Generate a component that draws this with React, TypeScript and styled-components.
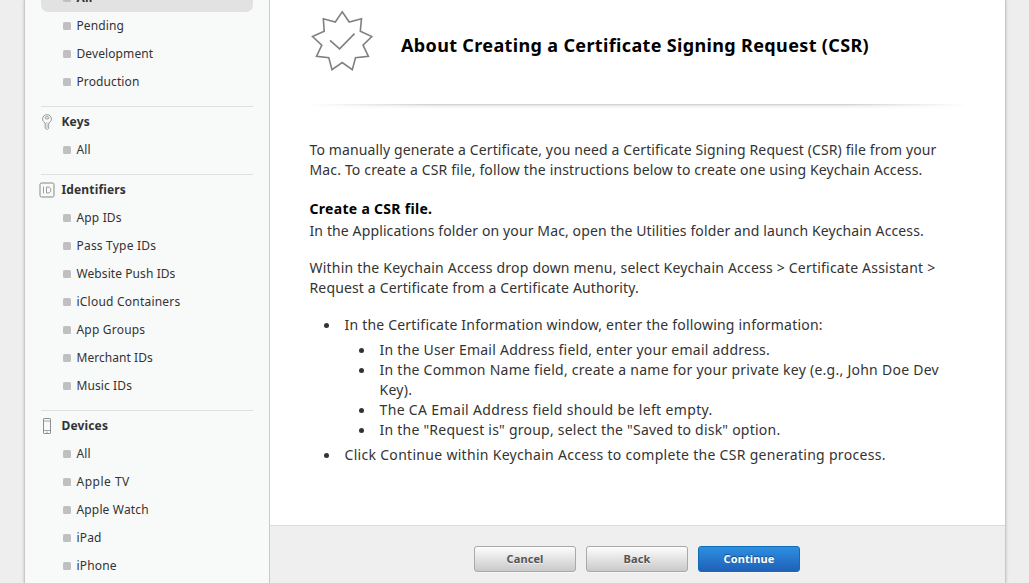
import React from "react";
import styled, { createGlobalStyle } from "styled-components";

const GlobalStyle = createGlobalStyle`
  * { box-sizing: border-box; }
  html, body { margin: 0; height: 583px; overflow: hidden; background: #eee; }
  body { font-family: "Lucida Grande", "Noto Sans", sans-serif; color: #333; }
`;

const Page = styled.div`
  display: flex;
  width: 982px;
  height: 583px;
  margin-left: 24px;
  overflow: hidden;
  background: #fff;
  border: solid #c9c9c9;
  border-width: 0 1px;
  box-shadow: 0 0 3px rgba(0, 0, 0, 0.2);
`;

const Sidebar = styled.nav`
  flex: 0 0 245px;
  padding: 0 16px;
  background: #f8faf9;
  border-right: 1px solid #c9c9c9;
`;

const Section = styled.section<{ $first?: boolean }>`
  padding-bottom: 10px;
  ${(p) => (p.$first ? "margin-top: -16px;" : "border-top: 1px solid #dedfdf; padding-top: 1px;")}
`;

const SectionTitle = styled.h3`
  display: flex;
  align-items: center;
  gap: 6.5px;
  height: 28px;
  margin: 0 0 0 -2px;
  font-size: 12px;
  line-height: 28px;
  font-weight: 700;
  letter-spacing: 0.15px;
  svg { flex: none; }
`;

const Item = styled.a<{ $active?: boolean }>`
  display: flex;
  align-items: center;
  height: 28px;
  padding-left: 22px;
  gap: 5.5px;
  font-size: 12px;
  line-height: 28px;
  font-weight: ${(p) => (p.$active ? 700 : 400)};
  border-radius: 7px;
  background: ${(p) => (p.$active ? "#e2e2e2" : "none")};
  white-space: nowrap;
  &::before {
    content: "";
    flex: none;
    width: 8px;
    height: 8px;
    border-radius: 1.5px;
    background: #c0c0c0;
  }
`;

const ItemLabel = styled.span<{ $track?: number }>`
  letter-spacing: ${(p) => p.$track ?? 0.15}px;
`;

const Main = styled.main`
  flex: 1;
  display: flex;
  flex-direction: column;
`;

const Header = styled.header`
  display: flex;
  height: 104px;
  padding: 10px 0 0 41px;
  gap: 28px;
`;

const Title = styled.h1`
  margin: 0;
  padding-top: 22px;
  color: #000;
  font-size: 18px;
  line-height: 26px;
  font-weight: 700;
  letter-spacing: 0.35px;
  white-space: nowrap;
`;

const Divider = styled.div`
  height: 5px;
  margin: 0 36px 0 38px;
  background: linear-gradient(#d5d5d5 0 1px, #e6e6e6 1px 2px, #f4f4f4 2px 3px, #fff);
  mask-image: linear-gradient(90deg, transparent, #000 18%, #000 82%, transparent);
`;

const Article = styled.article`
  flex: 1;
  padding: 31px 0 0 39.5px;
  font-size: 14px;
  line-height: 20px;
  white-space: nowrap;
`;

const Paragraph = styled.p<{ $gap?: number }>`
  margin: 0 0 ${(p) => p.$gap ?? 17}px;
`;

const Subtitle = styled.h2`
  margin: 0 0 2px;
  color: #000;
  font-size: 14px;
  line-height: 20px;
  font-weight: 700;
  letter-spacing: 0.3px;
`;

const Line = styled.span<{ $track?: number }>`
  display: block;
  letter-spacing: ${(p) => p.$track ?? 0.2}px;
`;

const List = styled.ul<{ $nested?: boolean }>`
  margin: ${(p) => (p.$nested ? "5px 0" : "0")};
  padding-left: 35px;
  list-style: none;
`;

const ListItem = styled.li`
  position: relative;
  &::before {
    content: "";
    position: absolute;
    left: -20.5px;
    top: 8px;
    width: 5px;
    height: 5px;
    border-radius: 50%;
    background: #333;
  }
`;

const Footer = styled.footer`
  display: flex;
  justify-content: center;
  gap: 10px;
  height: 58px;
  padding: 20px 1px 0 0;
  background: #efefef;
  border-top: 1px solid #dcdcdc;
`;

const Button = styled.button<{ $primary?: boolean }>`
  width: 102px;
  height: 26px;
  padding: 0;
  border: 1px solid ${(p) => (p.$primary ? "#0e6db5" : "#a9a9a9")};
  border-radius: 3px;
  background: ${(p) => (p.$primary ? "linear-gradient(#2d8fe2, #1f61b8)" : "linear-gradient(#fdfdfd, #c9c9c9)")};
  box-shadow: 0 1px 0 rgba(255, 255, 255, 0.5);
  color: ${(p) => (p.$primary ? "#fff" : "#555")};
  text-shadow: ${(p) => (p.$primary ? "0 -1px 1px rgba(0, 0, 0, 0.4)" : "0 1px 0 rgba(255, 255, 255, 0.6)")};
  font: 700 11px/24px "Lucida Grande", "Noto Sans", sans-serif;
  letter-spacing: 0.1px;
`;

const Seal = () => (
  <svg width="62" height="62" viewBox="311 10 62 62" fill="none" stroke="#808080" strokeWidth="1.6">
    <path d="M342.2 11.8 349.2 22 361.5 18.7 360.3 31.2 371.8 36.5 363 45.2 368.4 56.3 355.5 57.8 352.3 69.7 342.2 62.5 332 69.7 328.8 57.8 316.5 56.3 321.8 45.2 312.5 36.5 324.2 31.2 323.3 18.7 335.3 22Z" />
    <path d="M330 40.3 339.6 48.8 354.5 33.6" />
  </svg>
);

const KeyIcon = () => (
  <svg width="16" height="16" viewBox="0 0 16 16" fill="none" stroke="#8c8f8e" strokeWidth="0.9">
    <path d="M6.2 8.9C4.5 8.2 3.6 6.7 3.6 5 3.6 2.5 5.4.7 8 .7s4.4 1.8 4.4 4.3c0 1.7-.9 3.2-2.5 3.9v1.3l-1 .9 1 1-1 .9 1 .9-1.7 1.7-2-1.4Z" />
    <ellipse cx="8" cy="3.8" rx="1.8" ry="1.2" />
    <path d="M8 8v6" strokeWidth="0.5" />
  </svg>
);

const IdIcon = () => (
  <svg width="16" height="16" viewBox="0 0 16 16" fill="none" stroke="#858887">
    <rect x="1" y="1" width="14" height="14" rx="1.6" />
    <path d="M4.5 4.6v6.8M7.5 5v6H9c1.8 0 2.8-1.1 2.8-3S10.8 5 9 5Z" strokeWidth="0.8" />
  </svg>
);

const PhoneIcon = () => (
  <svg width="16" height="16" viewBox="0 0 16 16" fill="none" stroke="#8c8f8e">
    <rect x="4.5" y="0.5" width="7" height="15" rx="0.6" />
    <path d="M4.5 3h7M4.5 12.5h7M7.3 14.2h1.5" strokeWidth="0.8" />
  </svg>
);

type Entry = { label: string; track?: number };

const sections: { title: string; icon: React.ReactNode; items: Entry[] }[] = [
  { title: "Keys", icon: <KeyIcon />, items: [{ label: "All" }] },
  {
    title: "Identifiers",
    icon: <IdIcon />,
    items: [
      { label: "App IDs" },
      { label: "Pass Type IDs", track: 0.2 },
      { label: "Website Push IDs", track: 0.08 },
      { label: "iCloud Containers", track: 0.22 },
      { label: "App Groups", track: 0.2 },
      { label: "Merchant IDs", track: 0.05 },
      { label: "Music IDs", track: 0.1 },
    ],
  },
  {
    title: "Devices",
    icon: <PhoneIcon />,
    items: [{ label: "All" }, { label: "Apple TV", track: 0.5 }, { label: "Apple Watch" }, { label: "iPad" }, { label: "iPhone" }],
  },
];

export default function App() {
  return (
    <>
      <GlobalStyle />
      <Page>
        <Sidebar>
          <Section $first>
            <Item $active>
              <ItemLabel>All</ItemLabel>
            </Item>
            {["Pending", "Development", "Production"].map((label) => (
              <Item key={label}>
                <ItemLabel $track={0.1}>{label}</ItemLabel>
              </Item>
            ))}
          </Section>
          {sections.map((s) => (
            <Section key={s.title}>
              <SectionTitle>
                {s.icon}
                {s.title}
              </SectionTitle>
              {s.items.map((i) => (
                <Item key={i.label}>
                  <ItemLabel $track={i.track}>{i.label}</ItemLabel>
                </Item>
              ))}
            </Section>
          ))}
        </Sidebar>
        <Main>
          <Header>
            <Seal />
            <Title>About Creating a Certificate Signing Request (CSR)</Title>
          </Header>
          <Divider />
          <Article>
            <Paragraph $gap={19}>
              <Line $track={0.12}>To manually generate a Certificate, you need a Certificate Signing Request (CSR) file from your</Line>
              <Line $track={0.15}>Mac. To create a CSR file, follow the instructions below to create one using Keychain Access.</Line>
            </Paragraph>
            <Subtitle>Create a CSR file.</Subtitle>
            <Paragraph>
              <Line $track={0.12}>In the Applications folder on your Mac, open the Utilities folder and launch Keychain Access.</Line>
            </Paragraph>
            <Paragraph>
              <Line $track={0.21}>Within the Keychain Access drop down menu, select Keychain Access &gt; Certificate Assistant &gt;</Line>
              <Line $track={0.15}>Request a Certificate from a Certificate Authority.</Line>
            </Paragraph>
            <List>
              <ListItem>
                <Line>In the Certificate Information window, enter the following information:</Line>
                <List $nested>
                  <ListItem>
                    <Line $track={0.24}>In the User Email Address field, enter your email address.</Line>
                  </ListItem>
                  <ListItem>
                    <Line $track={0.26}>In the Common Name field, create a name for your private key (e.g., John Doe Dev</Line>
                    <Line $track={0.26}>Key).</Line>
                  </ListItem>
                  <ListItem>
                    <Line $track={0.35}>The CA Email Address field should be left empty.</Line>
                  </ListItem>
                  <ListItem>
                    <Line $track={0.23}>In the "Request is" group, select the "Saved to disk" option.</Line>
                  </ListItem>
                </List>
              </ListItem>
              <ListItem>
                <Line $track={0.3}>Click Continue within Keychain Access to complete the CSR generating process.</Line>
              </ListItem>
            </List>
          </Article>
          <Footer>
            <Button>Cancel</Button>
            <Button>Back</Button>
            <Button $primary>Continue</Button>
          </Footer>
        </Main>
      </Page>
    </>
  );
}
